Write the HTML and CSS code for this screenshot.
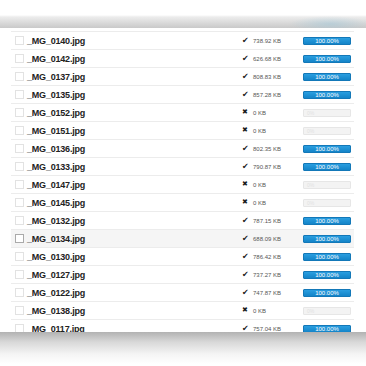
FILE: index.html
```html
<!DOCTYPE html>
<html lang="en">
<head>
    <meta charset="UTF-8">
    <title>uploads</title>
    <link rel="stylesheet" href="styles.css">
</head>
<body>
<div class="top-shade"></div>
<div class="gap"></div>
<div class="list">
    <ul>
        <li><span class="cb"></span><span class="name">_MG_0140.jpg</span><span class="st ok">738.92 KB</span><span class="bar full">100.00%</span></li>
        <li><span class="cb"></span><span class="name">_MG_0142.jpg</span><span class="st ok">626.68 KB</span><span class="bar full">100.00%</span></li>
        <li><span class="cb"></span><span class="name">_MG_0137.jpg</span><span class="st ok">808.83 KB</span><span class="bar full">100.00%</span></li>
        <li><span class="cb"></span><span class="name">_MG_0135.jpg</span><span class="st ok">857.28 KB</span><span class="bar full">100.00%</span></li>
        <li><span class="cb"></span><span class="name">_MG_0152.jpg</span><span class="st err">0 KB</span><span class="bar">0%</span></li>
        <li><span class="cb"></span><span class="name">_MG_0151.jpg</span><span class="st err">0 KB</span><span class="bar">0%</span></li>
        <li><span class="cb"></span><span class="name">_MG_0136.jpg</span><span class="st ok">802.35 KB</span><span class="bar full">100.00%</span></li>
        <li><span class="cb"></span><span class="name">_MG_0133.jpg</span><span class="st ok">790.87 KB</span><span class="bar full">100.00%</span></li>
        <li><span class="cb"></span><span class="name">_MG_0147.jpg</span><span class="st err">0 KB</span><span class="bar">0%</span></li>
        <li><span class="cb"></span><span class="name">_MG_0145.jpg</span><span class="st err">0 KB</span><span class="bar">0%</span></li>
        <li><span class="cb"></span><span class="name">_MG_0132.jpg</span><span class="st ok">787.15 KB</span><span class="bar full">100.00%</span></li>
        <li class="hover"><span class="cb"></span><span class="name">_MG_0134.jpg</span><span class="st ok">688.09 KB</span><span class="bar full">100.00%</span></li>
        <li><span class="cb"></span><span class="name">_MG_0130.jpg</span><span class="st ok">786.42 KB</span><span class="bar full">100.00%</span></li>
        <li><span class="cb"></span><span class="name">_MG_0127.jpg</span><span class="st ok">737.27 KB</span><span class="bar full">100.00%</span></li>
        <li><span class="cb"></span><span class="name">_MG_0122.jpg</span><span class="st ok">747.87 KB</span><span class="bar full">100.00%</span></li>
        <li><span class="cb"></span><span class="name">_MG_0138.jpg</span><span class="st err">0 KB</span><span class="bar">0%</span></li>
        <li><span class="cb"></span><span class="name">_MG_0117.jpg</span><span class="st ok">757.04 KB</span><span class="bar full">100.00%</span></li>
    </ul>
</div>
<div class="bottom-shade"></div>
</body>
</html>
```

FILE: styles.css
```css
* {
    margin: 0;
    padding: 0
}
body {
    background: #fff;
    font-family: "Liberation Sans", Arial, sans-serif;
    width: 366px;
    height: 366px;
    overflow: hidden;
}
.top-shade {
    height: 28px;
    background:
        radial-gradient(ellipse 40px 8px at 330px 24px, rgba(150, 195, 215, 0.45), rgba(150, 195, 215, 0)),
        linear-gradient(#fff 0, #fff 15px, #ececec 17px, #c9c9c9 28px);
}
.gap {
    height: 3px;
}
.list {
    margin-left: 11px;
    width: 343px;
    height: 300px;
    overflow: hidden;
    border-top: 1px solid #ececec;
}
ul {
    list-style: none;
}
li {
    display: flex;
    align-items: center;
    height: 17px;
    border-bottom: 1px solid #ececec;
}
li.hover {
    background: #f5f5f5;
}
.cb {
    width: 7px;
    height: 7px;
    border: 1px solid #e2e2e2;
    background: #fff;
    margin-left: 4px;
    flex: none;
}
li.hover .cb {
    border-color: #aaa;
}
.name {
    flex: 1;
    margin-left: 3px;
    font-size: 9px;
    font-weight: bold;
    color: #222;
    letter-spacing: -0.2px;
}
.st {
    width: 50px;
    padding-left: 11px;
    font-size: 6px;
    color: #555;
    position: relative;
}
.st:before {
    position: absolute;
    left: 0;
    font-family: "DejaVu Sans", sans-serif;
    color: #1a1a1a;
    line-height: 1;
}
.ok:before {
    content: "\2714";
    font-size: 8px;
    top: -1px;
}
.err:before {
    content: "\2716";
    font-size: 7px;
    top: -0.5px;
}
.bar {
    width: 46px;
    height: 6px;
    margin-right: 3px;
    border: 1px solid #e6e6e6;
    border-radius: 1px;
    background: #f3f3f3;
    color: #e2e2e2;
    font-size: 5px;
    line-height: 6px;
    text-indent: 3px;
}
.bar.full {
    background: linear-gradient(#2a9ee0, #1484c8);
    border-color: #1378b8;
    color: #fff;
    text-align: center;
    text-indent: 0;
    font-size: 6px;
}
.bottom-shade {
    height: 35px;
    background: linear-gradient(#b2b2b2, #d8d8d8 10px, #f4f4f4 22px, #fff 32px);
}
```
